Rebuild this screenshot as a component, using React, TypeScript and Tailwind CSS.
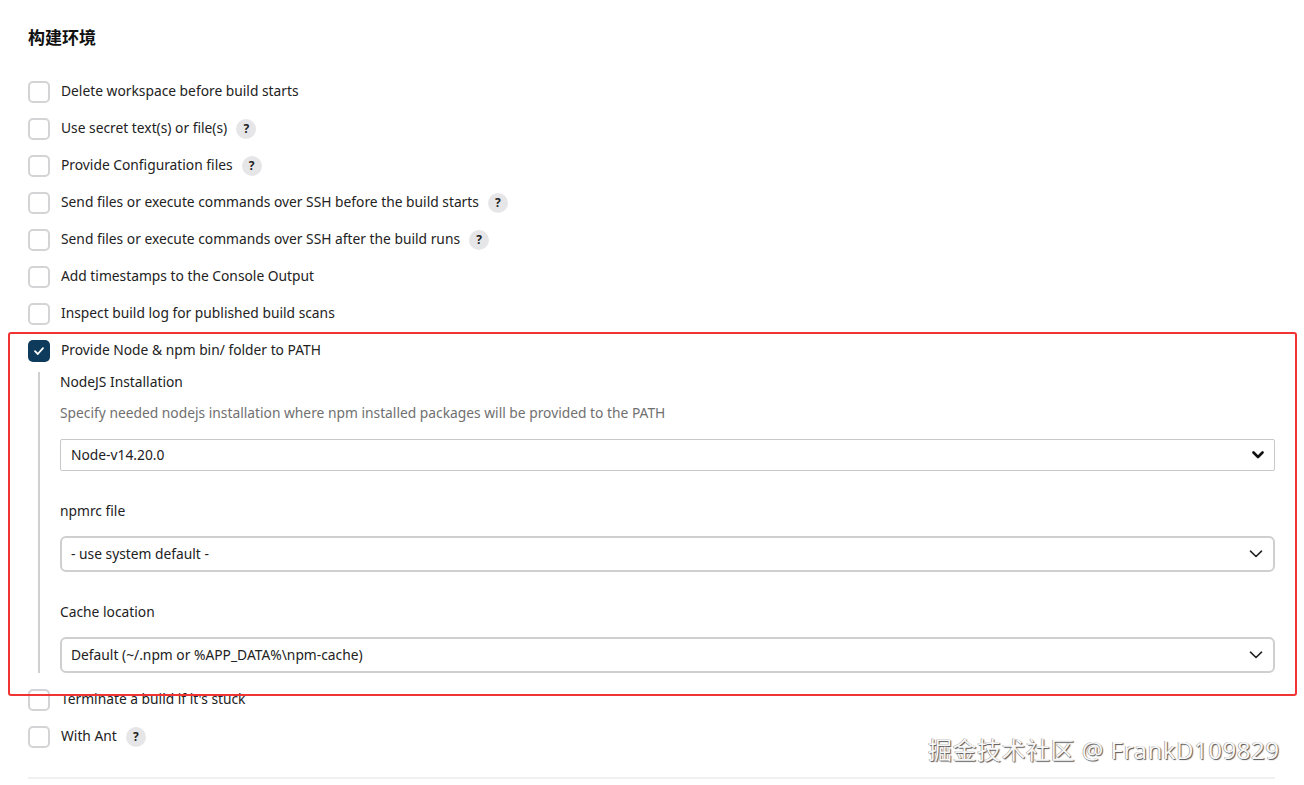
import React from "react";

const font = { fontFamily: '"Noto Sans", "Noto Sans CJK SC", sans-serif' };

function Help() {
  return (
    <span className="ml-[9px] inline-flex h-[20px] w-[20px] items-center justify-center rounded-full bg-[#e6e6e8] text-[12px] font-bold text-[#222]">
      ?
    </span>
  );
}

function Box({ checked }: { checked?: boolean }) {
  if (checked) {
    return (
      <span className="mr-[11px] flex h-[22px] w-[22px] shrink-0 items-center justify-center rounded-[5px] bg-[#0e3b5b]">
        <svg width="12" height="12" viewBox="0 0 12 12" fill="none">
          <path d="M2 6.2 L4.8 9 L10 3.2" stroke="white" strokeWidth="1.8" strokeLinecap="round" strokeLinejoin="round" />
        </svg>
      </span>
    );
  }
  return <span className="mr-[11px] h-[22px] w-[22px] shrink-0 rounded-[5px] border-2 border-[#d4d4d6] bg-white" />;
}

function Row({ label, help, checked }: { label: string; help?: boolean; checked?: boolean }) {
  return (
    <div className="flex h-[37px] items-center text-[13.8px] text-[#222]">
      <Box checked={checked} />
      <span>{label}</span>
      {help && <Help />}
    </div>
  );
}

function Chevron({ bold }: { bold?: boolean }) {
  return bold ? (
    <svg width="12" height="8" viewBox="0 0 12 8" fill="none">
      <path d="M1.5 1.5 L6 6 L10.5 1.5" stroke="#111" strokeWidth="2.6" strokeLinecap="round" strokeLinejoin="round" />
    </svg>
  ) : (
    <svg width="14" height="8" viewBox="0 0 14 8" fill="none">
      <path d="M1.5 1.2 L7 6.5 L12.5 1.2" stroke="#222" strokeWidth="1.6" strokeLinecap="round" strokeLinejoin="round" />
    </svg>
  );
}

export default function App() {
  return (
    <div className="relative h-[785px] w-[1304px] overflow-hidden bg-white" style={font}>
      <div className="pl-[28px] pr-[29px] pt-[26px]">
        <h2 className="h-[24px] text-[17px] font-bold leading-[24px] text-[#111]">构建环境</h2>
        <div className="mt-[23px]">
          <Row label="Delete workspace before build starts" />
          <Row label="Use secret text(s) or file(s)" help />
          <Row label="Provide Configuration files" help />
          <Row label="Send files or execute commands over SSH before the build starts" help />
          <Row label="Send files or execute commands over SSH after the build runs" help />
          <Row label="Add timestamps to the Console Output" />
          <Row label="Inspect build log for published build scans" />
          <Row label="Provide Node & npm bin/ folder to PATH" checked />
          <div className="ml-[10px] mt-[3px] border-l-2 border-[#d0d0d0] pl-[20px] text-[13.8px]">
            <div className="h-[20px] leading-[20px] text-[#222]">NodeJS Installation</div>
            <div className="mt-[11px] h-[20px] leading-[20px] text-[#707070]">
              Specify needed nodejs installation where npm installed packages will be provided to the PATH
            </div>
            <div className="mt-[16px] flex h-[32px] items-center justify-between rounded-[2px] border border-[#c8c8c8] pl-[10px] pr-[10px] text-[#222]">
              <span>Node-v14.20.0</span>
              <Chevron bold />
            </div>
            <div className="mt-[30px] h-[20px] leading-[20px] text-[#222]">npmrc file</div>
            <div className="mt-[15px] flex h-[36px] items-center justify-between rounded-[6px] border-2 border-[#cfcfcf] pl-[9px] pr-[10px] text-[#222]">
              <span>- use system default -</span>
              <Chevron />
            </div>
            <div className="mt-[30px] h-[20px] leading-[20px] text-[#222]">Cache location</div>
            <div className="mt-[15px] flex h-[36px] items-center justify-between rounded-[6px] border-2 border-[#cfcfcf] pl-[9px] pr-[10px] text-[#222]">
              <span>Default (~/.npm or %APP_DATA%\npm-cache)</span>
              <Chevron />
            </div>
          </div>
          <div className="mt-[8px]">
            <Row label="Terminate a build if it's stuck" />
            <Row label="With Ant" help />
          </div>
        </div>
        <div className="mt-[22px] h-[2px] bg-[#f0f0f0]" />
      </div>

      <div className="pointer-events-none absolute left-[8px] top-[332px] h-[364px] w-[1289px] rounded-[3px] border-2 border-[#f03434]" />

      <div className="absolute left-[928px] top-[732px] text-[24px] tracking-[0.5px] text-[#f7f7f7] [text-shadow:1px_1px_1px_#555,-0.5px_-0.5px_0.5px_#888]">
        掘金技术社区 @ FrankD109829
      </div>
    </div>
  );
}
